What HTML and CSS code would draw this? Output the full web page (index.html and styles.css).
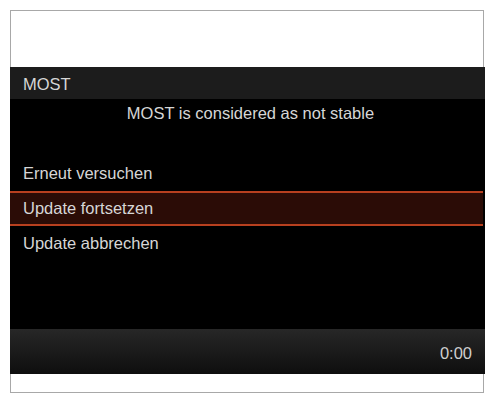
FILE: index.html
```html
<!DOCTYPE html>
<html lang="de">
<head>
<meta charset="utf-8">
<title>MOST</title>
<link rel="stylesheet" href="styles.css">
</head>
<body>
<div class="frame">
  <div class="top"></div>
  <div class="screen">
    <div class="header">MOST</div>
    <div class="body">
      <div class="subtitle">MOST is considered as not stable</div>
      <ul class="menu">
        <li class="item">Erneut versuchen</li>
        <li class="item selected">Update fortsetzen</li>
        <li class="item">Update abbrechen</li>
      </ul>
    </div>
    <div class="footer">0:00</div>
  </div>
  <div class="bottom"></div>
</div>
</body>
</html>
```

FILE: styles.css
```css
html, body {
  margin: 0;
  padding: 0;
  background: #ffffff;
}

body {
  font-family: "Liberation Sans", Arial, sans-serif;
  font-size: 16.5px;
  color: #d6d6d6;
}

.frame {
  margin: 10px 0 0 10px;
  width: 475px;
  display: flex;
  flex-direction: column;
}

.top {
  height: 56px;
  border: 1px solid #a8a8a8;
  border-bottom: none;
  margin-right: 1px;
  background: #ffffff;
}

.screen {
  height: 307px;
  background: #000000;
  display: flex;
  flex-direction: column;
}

.header {
  height: 32px;
  box-sizing: border-box;
  padding: 3px 0 0 13px;
  background: #1c1c1c;
  display: flex;
  align-items: center;
}

.body {
  flex: 1;
  display: flex;
  flex-direction: column;
}

.subtitle {
  height: 28px;
  display: flex;
  align-items: center;
  justify-content: center;
  padding-left: 6px;
}

.menu {
  list-style: none;
  margin: 29px 0 0 0;
  padding: 0;
}

.item {
  height: 35px;
  box-sizing: border-box;
  padding: 0 0 1px 13px;
  display: flex;
  align-items: center;
}

.item.selected {
  margin-right: 2px;
  background: #2b0c06;
  border-top: 2px solid #b8401f;
  border-bottom: 2px solid #b8401f;
}

.footer {
  height: 45px;
  box-sizing: border-box;
  padding: 4px 13px 0 0;
  background: linear-gradient(#272727, #1c1c1c 45%, #0e0e0e);
  display: flex;
  align-items: center;
  justify-content: flex-end;
  color: #cfcfcf;
}

.bottom {
  height: 18px;
  border: 1px solid #a8a8a8;
  border-top: none;
  margin-right: 1px;
  background: #ffffff;
}
```
